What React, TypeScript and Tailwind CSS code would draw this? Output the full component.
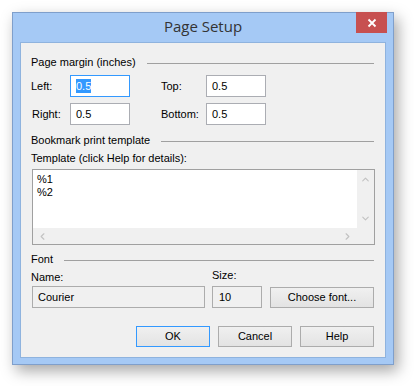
import { ChevronUp, ChevronDown, ChevronLeft, ChevronRight } from "lucide-react";

const ui = { fontFamily: "Tahoma, 'Liberation Sans', Arial, sans-serif" };

function GroupTitle({ label }: { label: string }) {
  return (
    <div className="flex h-[16px] items-center gap-[11px]">
      <span className="whitespace-nowrap">{label}</span>
      <div className="mt-[3px] h-px flex-1 bg-[#a0a0a0]" />
    </div>
  );
}

function Field({ value, focused }: { value: string; focused?: boolean }) {
  return (
    <div
      className={`flex h-[22px] w-[60px] items-center border bg-white px-[5px] ${
        focused ? "border-[#3399ff]" : "border-[#abadb3]"
      }`}
    >
      {focused ? (
        <span className="bg-[#3399ff] leading-[14px] text-white">{value}</span>
      ) : (
        <span className="text-black">{value}</span>
      )}
    </div>
  );
}

function Button({ label, primary, wide }: { label: string; primary?: boolean; wide?: boolean }) {
  return (
    <div
      className={`flex h-[21px] items-center justify-center border bg-gradient-to-b from-[#f0f0f0] to-[#e3e3e3] text-black ${
        primary ? "border-[#3399ff]" : "border-[#acacac]"
      } ${wide ? "w-[104px]" : "w-[74px]"}`}
    >
      {label}
    </div>
  );
}

export default function App() {
  return (
    <div className="h-[386px] w-[414px] bg-white pl-[12px] pt-[12px]">
      {/* Window frame */}
      <div className="flex h-[353px] w-[382px] flex-col border border-[#7f9fcb] bg-[#a5c9f5] px-[7px] pb-[6px] shadow-[4px_6px_14px_rgba(0,0,0,0.35)]">
        {/* Title bar */}
        <div className="relative flex h-[29px] items-center justify-center">
          <span
            className="mt-[-2px] text-[15px] text-[#333]"
            style={{ fontFamily: "'Open Sans', 'Noto Sans', sans-serif" }}
          >
            Page Setup
          </span>
          <div className="absolute right-[-1px] top-[-1px] flex h-[21px] w-[31px] items-center justify-center bg-[#c75050]">
            <svg width="10" height="10" viewBox="0 0 10 10">
              <path d="M1.5 1.5L8.5 8.5M8.5 1.5L1.5 8.5" stroke="white" strokeWidth="1.8" />
            </svg>
          </div>
        </div>

        {/* Client area */}
        <div
          className="flex flex-1 flex-col border border-[#8fb3de] bg-[#f0f0f0] pl-[10px] pr-[11px] pt-[11px] text-[11px] text-black"
          style={ui}
        >
          <GroupTitle label="Page margin (inches)" />

          <div className="mt-[5px] grid grid-cols-[39px_60px_31px_45px_60px] items-center gap-y-[6px]">
            <span>Left:</span>
            <Field value="0.5" focused />
            <span />
            <span>Top:</span>
            <Field value="0.5" />
            <span className="pl-px">Right:</span>
            <Field value="0.5" />
            <span />
            <span>Bottom:</span>
            <Field value="0.5" />
          </div>

          <div className="mt-[7px]">
            <GroupTitle label="Bookmark print template" />
          </div>
          <div className="mt-[2px] h-[16px] leading-[16px]">Template (click Help for details):</div>

          {/* Template text box */}
          <div className="ml-px mt-[3px] flex h-[76px] w-[343px] flex-col border border-[#a0a0a0] bg-white">
            <div className="flex min-h-0 flex-1">
              <div className="flex-1 px-[4px] pt-[3px] leading-[13px]">
                <div>%1</div>
                <div>%2</div>
              </div>
              <div className="flex w-[17px] flex-col items-center justify-between bg-[#f0f0f0] py-[4px] text-[#c2c2c2]">
                <ChevronUp size={11} strokeWidth={2.5} />
                <ChevronDown size={11} strokeWidth={2.5} />
              </div>
            </div>
            <div className="flex h-[16px]">
              <div className="flex flex-1 items-center justify-between bg-[#f0f0f0] px-[4px] text-[#c2c2c2]">
                <ChevronLeft size={11} strokeWidth={2.5} />
                <ChevronRight size={11} strokeWidth={2.5} />
              </div>
              <div className="w-[17px] bg-[#f0f0f0]" />
            </div>
          </div>

          <div className="mt-[6px]">
            <GroupTitle label="Font" />
          </div>

          <div className="mt-[2px] flex items-start">
            <div className="flex w-[176px] flex-col">
              <span className="h-[16px] leading-[16px]">Name:</span>
              <div className="ml-px mt-px flex h-[22px] items-center border border-[#acacac] bg-[#f0f0f0] px-[5px]">
                Courier
              </div>
            </div>
            <div className="ml-[7px] flex flex-col">
              <span className="-mt-[2px] h-[16px] leading-[16px]">Size:</span>
              <div className="mt-[3px] flex h-[22px] w-[50px] items-center border border-[#acacac] bg-[#f0f0f0] px-[6px]">
                10
              </div>
            </div>
            <div className="ml-[8px] mt-[18px]">
              <Button label="Choose font..." wide />
            </div>
          </div>

          {/* Dialog buttons */}
          <div className="mt-[18px] flex justify-end gap-[8px]">
            <Button label="OK" primary />
            <Button label="Cancel" />
            <Button label="Help" />
          </div>
        </div>
      </div>
    </div>
  );
}
